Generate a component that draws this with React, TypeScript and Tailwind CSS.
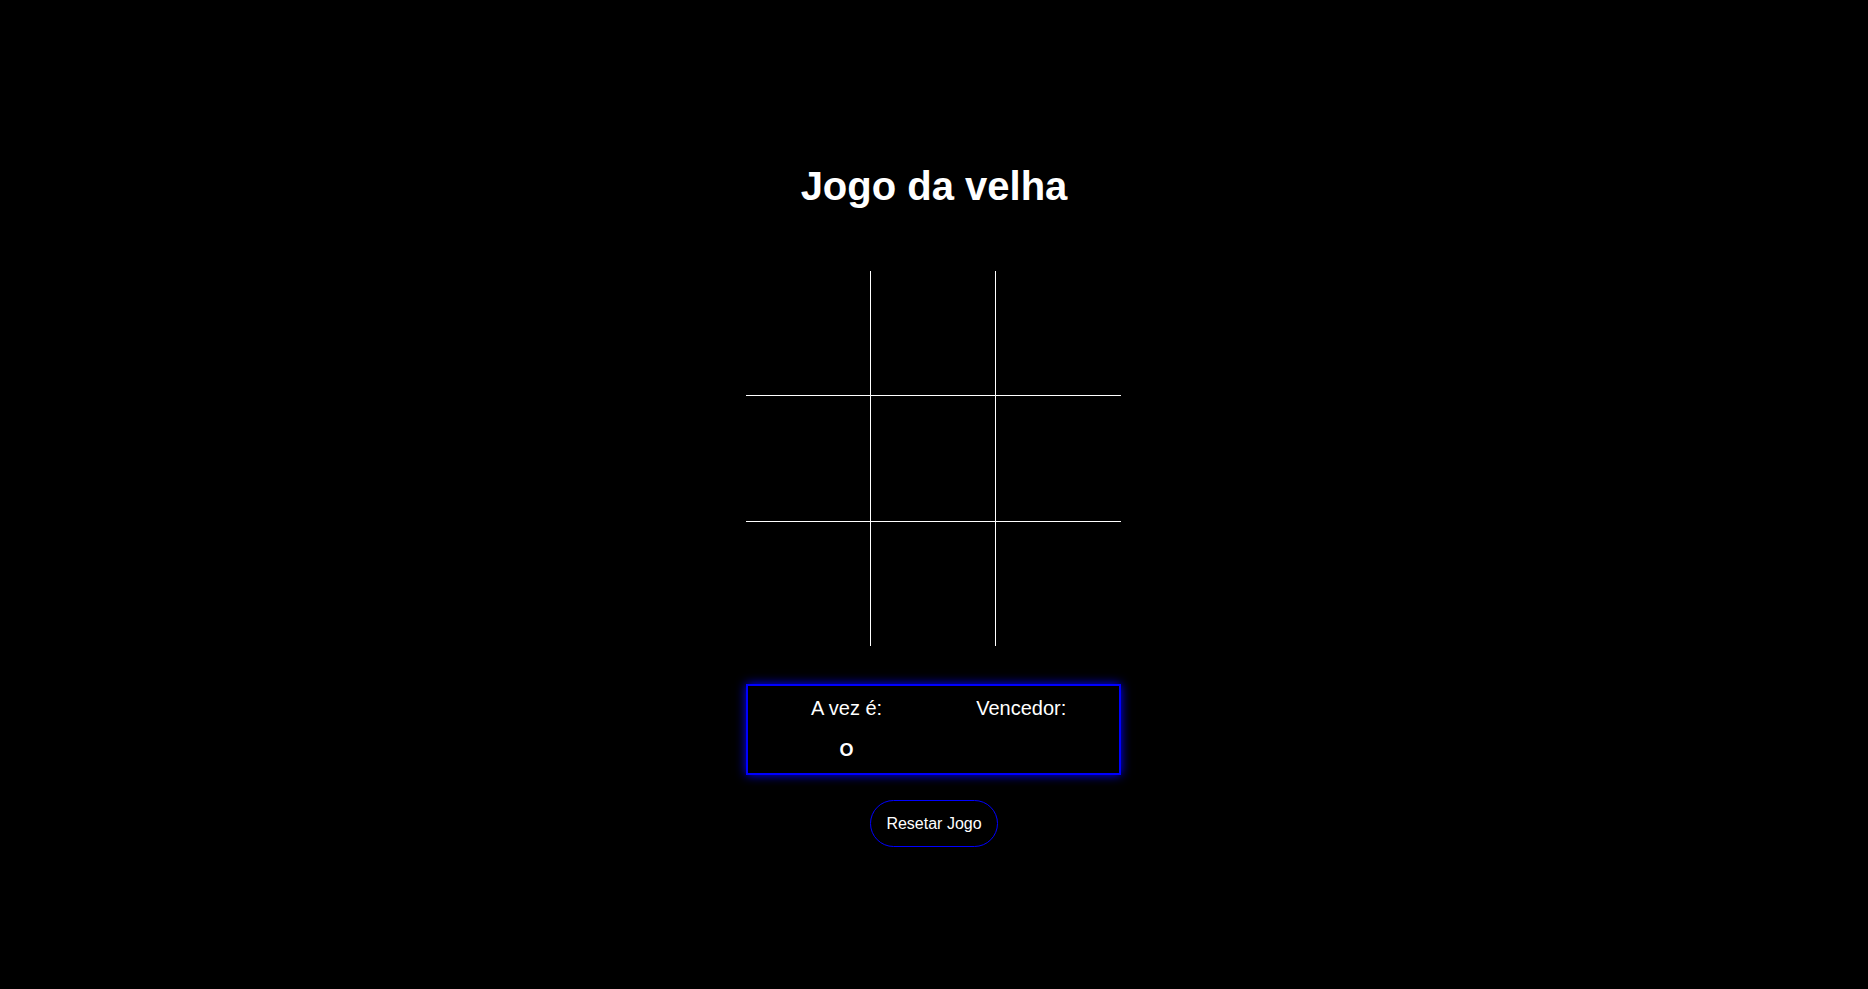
import { useState } from "react";

const cellBorders = [
  "border-r border-b",
  "border-r border-b",
  "border-b",
  "border-r border-b",
  "border-r border-b",
  "border-b",
  "border-r",
  "border-r",
  "",
];

const lines = [
  [0, 1, 2],
  [3, 4, 5],
  [6, 7, 8],
  [0, 3, 6],
  [1, 4, 7],
  [2, 5, 8],
  [0, 4, 8],
  [2, 4, 6],
];

function getWinner(board: string[]) {
  for (const [a, b, c] of lines) {
    if (board[a] && board[a] === board[b] && board[a] === board[c]) return board[a];
  }
  return "";
}

export default function App() {
  const [board, setBoard] = useState<string[]>(Array(9).fill(""));
  const [turn, setTurn] = useState("O");
  const winner = getWinner(board);

  const play = (i: number) => {
    if (board[i] || winner) return;
    const next = [...board];
    next[i] = turn;
    setBoard(next);
    setTurn(turn === "O" ? "X" : "O");
  };

  const reset = () => {
    setBoard(Array(9).fill(""));
    setTurn("O");
  };

  return (
    <div className="min-h-screen w-full bg-black text-white flex flex-col items-center font-['Liberation_Sans',Arial,sans-serif]">
      <h1 className="mt-[163px] text-[40px] leading-[46px] font-bold">Jogo da velha</h1>

      {/* Tabuleiro */}
      <div className="mt-[62px] mr-px grid grid-cols-3 w-[375px] h-[375px]">
        {board.map((v, i) => (
          <button
            key={i}
            onClick={() => play(i)}
            className={`${cellBorders[i]} border-white flex items-center justify-center text-[64px] font-bold`}
          >
            {v}
          </button>
        ))}
      </div>

      {/* Placar */}
      <div className="mt-[38px] mr-px w-[375px] h-[91px] border-2 border-[#0000ff] shadow-[0_0_10px_#0000ff] flex pl-[63px] pt-[11px]">
        <div className="flex flex-col items-center">
          <span className="text-[20px] leading-[23px]">A vez é:</span>
          <span className="mt-[20px] text-[18px] leading-[21px] font-bold">{winner ? "" : turn}</span>
        </div>
        <div className="ml-[94px] flex flex-col items-center">
          <span className="text-[20px] leading-[23px]">Vencedor:</span>
          <span className="mt-[20px] text-[18px] leading-[21px] font-bold">{winner}</span>
        </div>
      </div>

      <button
        onClick={reset}
        className="mt-[25px] h-[47px] px-[15px] rounded-full border border-[#0000ff] text-[16px] text-white"
      >
        Resetar Jogo
      </button>
    </div>
  );
}
